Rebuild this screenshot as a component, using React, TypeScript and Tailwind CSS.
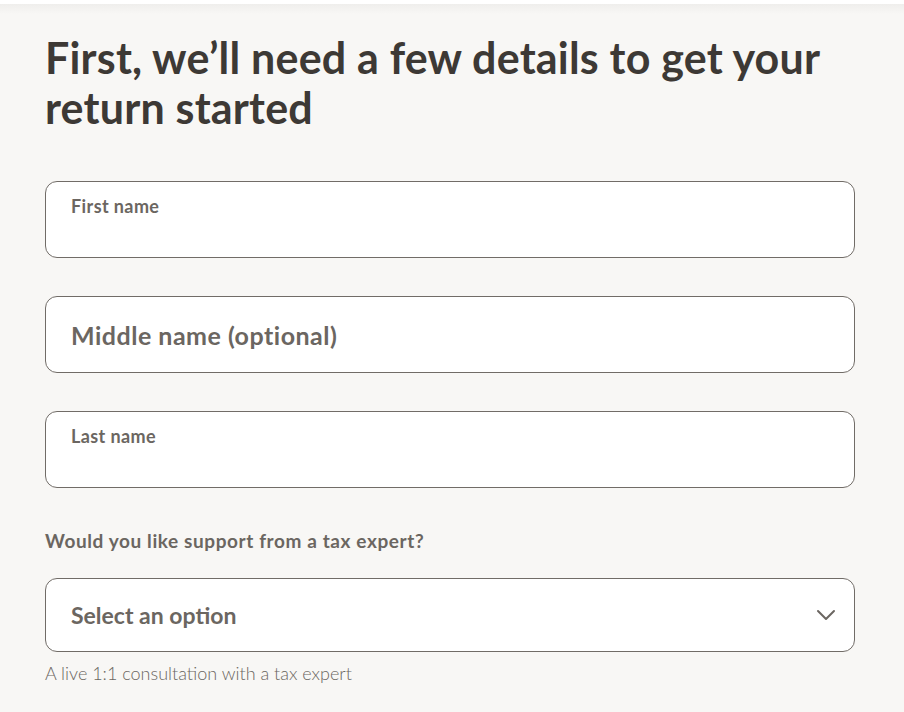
import { ChevronDown } from 'lucide-react';

function NameField({ label, floating }: { label: string; floating?: boolean }) {
  return (
    <div className="h-[77px] w-[810px] rounded-[12px] border border-[#716c67] bg-white px-[25px]">
      {floating ? (
        <div className="pt-[12px] text-[18px] font-bold leading-[24px] tracking-[0.4px] text-[#6b6661]">
          {label}
        </div>
      ) : (
        <div className="flex h-full items-center pt-[3px] text-[25px] font-bold tracking-[0.5px] text-[#6b6661]">
          {label}
        </div>
      )}
    </div>
  );
}

export default function App() {
  return (
    <div
      className="min-h-[712px] w-full bg-[#f8f7f5] text-[#3d3935]"
      style={{ fontFamily: 'Lato, "Noto Sans", sans-serif' }}
    >
      <div className="h-[4px] bg-white" />
      <div className="h-[10px] bg-gradient-to-b from-[#efeeec] to-[#f8f7f5]" />
      <div className="px-[45px] pt-[19px]">
        <h1 className="w-[810px] text-[43px] font-bold leading-[50px] tracking-[0.2px] text-[#3d3935]">
          First, we’ll need a few details to get your return started
        </h1>

        <div className="mt-[48px] flex flex-col gap-[38px]">
          <NameField label="First name" floating />
          <NameField label="Middle name (optional)" />
          <NameField label="Last name" floating />
        </div>

        <div className="mt-[41px] text-[19px] font-bold leading-[24px] tracking-[0.6px] text-[#6b6661]">
          Would you like support from a tax expert?
        </div>

        <button
          type="button"
          className="mt-[25px] flex h-[74px] w-[810px] items-center justify-between rounded-[12px] border border-[#716c67] bg-white pl-[25px] pr-[12px] text-left"
        >
          <span className="text-[23px] font-bold text-[#6b6661]">Select an option</span>
          <ChevronDown className="h-[32px] w-[32px] text-[#6b6661]" strokeWidth={1.5} />
        </button>

        <div className="mt-[9px] text-[18px] font-light leading-[24px] text-[#6b6661]">
          A live 1:1 consultation with a tax expert
        </div>
      </div>
    </div>
  );
}
